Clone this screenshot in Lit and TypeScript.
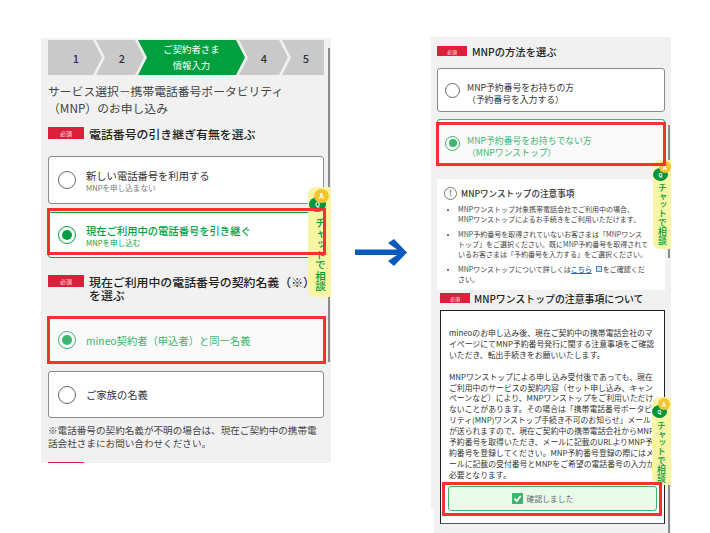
import { LitElement, html, css } from "lit";
import { customElement } from "lit/decorators.js";

const chat = (cls: string) => html`<div class="chat ${cls}">
  <span class="q">Q</span><span class="a">A</span>
  <span class="chat-text">チャットで相談</span>
</div>`;

@customElement("app-root")
export class AppRoot extends LitElement {
  static styles = css`
    :host { display: block; width: 710px; height: 533px; position: relative; overflow: hidden; background: #fff;
      font-family: "Noto Sans CJK JP", "Noto Sans", sans-serif; color: #333; }
    * { box-sizing: border-box; }
    .panel { position: absolute; background: #f1f1f1; overflow: hidden; }
    .left { left: 41px; top: 38px; width: 290px; height: 425px; padding: 2px 7px 0; }
    .steps { display: flex; height: 35px; }
    .step { background: #c9c9c9; display: flex; align-items: center; justify-content: center; margin-left: -6px;
      font-size: 11px; font-weight: 500; color: #333; }
    .s1 { width: 54px; margin-left: 0; clip-path: polygon(0 0, 45px 0, 54px 50%, 45px 100%, 0 100%); padding-left: 2px; }
    .s2 { width: 48px; clip-path: polygon(0 0, 39px 0, 48px 50%, 39px 100%, 0 100%, 9px 50%); padding-left: 4px; }
    .s3 { width: 107px; background: #00a040; color: #fff; font-size: 9.4px; line-height: 16px; text-align: center; font-weight: 400; padding-bottom: 1px;
      clip-path: polygon(0 0, 98px 0, 107px 50%, 98px 100%, 0 100%, 9px 50%); }
    .s4 { width: 49px; clip-path: polygon(0 0, 40px 0, 49px 50%, 40px 100%, 0 100%, 9px 50%); padding-left: 1px; }
    .s5 { width: 42px; clip-path: polygon(0 0, 100% 0, 100% 100%, 0 100%, 9px 50%); padding-left: 6px; }
    .title { margin: 7px 0 0; font-size: 11.8px; line-height: 17px; font-weight: 400; color: #444; white-space: nowrap; }
    .head { display: flex; gap: 5px; align-items: flex-start; color: #222; font-weight: 500; }
    .badge { flex: none; background: #dc1f3a; color: #f6c9cf; display: flex; align-items: center; justify-content: center; }
    .left .badge { width: 36px; height: 12px; font-size: 6px; }
    .left .head { font-size: 11.9px; line-height: 13px; }
    .h1 { margin-top: 11px; height: 29px; }
    .h2 { margin-top: 17px; height: 42px; }
    .opt { border: 1px solid #8a8a8a; border-radius: 3px; background: #fff; display: flex; align-items: center; }
    .left .opt { height: 48px; padding-left: 9px; gap: 10px; font-size: 10.3px; line-height: 13px; }
    .radio { flex: none; width: 18px; height: 18px; border: 1px solid #666; border-radius: 50%; background: #fff;
      display: flex; align-items: center; justify-content: center; }
    .on { border-color: #00a040; color: #00a040; background: #fff; font-weight: 500; }
    .on .radio { border-color: #00a040; }
    .on .radio::after { content: ""; width: 10px; height: 10px; border-radius: 50%; background: #00a040; }
    .soft { border-color: #3cb56e; color: #3cb56e; background: #fafafa; font-weight: 400; }
    .soft .radio { border-color: #3cb56e; background: #fafafa; }
    .soft .radio::after { background: #3cb56e; }
    .sub { display: block; margin-top: 1px; font-size: 7.6px; line-height: 9px; color: #777; font-weight: 400; }
    .on .sub { color: #00a040; }
    .o2 { margin-top: 8px; height: 46px !important; }
    .o3 { height: 46px !important; }
    .o4 { margin-top: 8px; height: 47px !important; }
    .note { margin: 6px 0 0; font-size: 9.6px; line-height: 12.5px; color: #444; white-space: nowrap; }
    .h3 { margin-top: 13px; }

    .scroll { position: absolute; width: 2px; background: #8c8c8c; }
    .sb1 { left: 328px; top: 48px; height: 314px; }
    .sb2 { left: 668px; top: 125px; height: 133px; }
    .sb3 { left: 668px; top: 430px; height: 103px; }

    .right { left: 431px; top: 37px; width: 240px; height: 472px; padding: 8px 6px 0; }
    .right .badge { width: 30px; height: 10px; font-size: 5px; margin-top: 1px; }
    .right .head { font-size: 10.3px; line-height: 13px; }
    .right .opt { height: 44px; padding-left: 7px; gap: 7px; font-size: 8.8px; line-height: 12px; border-radius: 3px; }
    .right .opt-text { margin-top: 8px; }
    .right .radio { width: 15px; height: 15px; }
    .right .radio::after { width: 8px; height: 8px; }
    .ra { margin-top: 10px; }
    .rb { margin-top: 7px; height: 47px !important; border-bottom: none !important; border-radius: 3px 3px 0 0 !important; }
    .notice { margin-top: 13px; height: 111px; background: #fff; padding: 7px 8px 0 8px; color: #444; overflow: hidden; }
    .n-head { display: flex; align-items: center; gap: 4px; font-size: 8.6px; line-height: 14px; font-weight: 500; color: #333; }
    .bang { flex: none; width: 13px; height: 13px; border: 1.4px solid #777; border-radius: 50%; display: flex; align-items: center;
      justify-content: center; font-size: 8px; line-height: 1; color: #777; font-weight: 700; margin-left: -1px; }
    ul { margin: 4px 0 0; padding: 0 0 0 13px; font-size: 7px; line-height: 10px; white-space: nowrap; }
    li { margin-bottom: 5px; padding-left: 0; }
    li::marker { font-size: 6px; }
    a { color: #1a6fc4; text-decoration: underline; font-weight: 500; }
    .ext { display: inline-block; width: 6px; height: 6px; background: #cfe0f2; border: 1.5px solid #4f8cc9; margin: 0 1px 0 4px; }

    .lower { left: 434px; top: 290px; width: 237px; height: 243px; padding: 3px 6px 0; }
    .lower .head { font-size: 9.9px; line-height: 13px; gap: 4px; }
    .lower .badge { width: 30px; height: 10px; font-size: 5px; }
    .modal { margin-top: 4px; height: 214px; width: 225px; background: #fff; border: 1px solid #222; border-bottom-color: #555;
      padding: 17px 8px 0; display: flex; flex-direction: column; }
    .modal p { margin: 0 0 10.9px; font-size: 7.85px; line-height: 10.9px; color: #333; white-space: nowrap; }
    .confirm { margin: -6px -1px 0 -1px; height: 25px; padding-right: 20px; background: #e9fbe9; border: 1px solid #3cb56e; border-radius: 3px;
      display: flex; align-items: center; justify-content: center; gap: 4px; font-size: 7.8px; color: #666; }
    .check { width: 11px; height: 11px; background: #3cb56e; border-radius: 1px; display: block; }

    .red { position: absolute; border: 3px solid #f53232; pointer-events: none; }
    .r1 { left: 47px; top: 208px; width: 279px; height: 47px; }
    .r2 { left: 47px; top: 316px; width: 279px; height: 48px; }
    .r3 { left: 436px; top: 122px; width: 230px; height: 44px; }
    .r4 { left: 442px; top: 482px; width: 220px; height: 34px; }

    .arrow { position: absolute; left: 355px; top: 239px; }

    .chat { position: absolute; background: #f8f6a4; border-radius: 7px 0 0 7px; }
    .chat-text { position: absolute; writing-mode: vertical-rl; text-orientation: upright; color: #00963c; font-weight: 500; white-space: nowrap; }
    .q, .a { position: absolute; border-radius: 50%; display: flex; align-items: center; justify-content: center; font-weight: 700; }
    .q { background: #00963c; color: #fff; }
    .a { background: #f4c430; color: #fff; }
    .c1 { left: 308px; top: 187px; width: 23px; height: 110px; }
    .c1 .q { left: 1px; top: 10px; width: 17px; height: 15px; font-size: 6px; }
    .c1 .a { left: 6px; top: 2px; width: 15px; height: 14px; font-size: 7px; }
    .c1 .chat-text { left: 6px; top: 31px; font-size: 10.5px; line-height: 13px; }
    .c2 { left: 653px; top: 160px; width: 18px; height: 89px; }
    .c3 { left: 652px; top: 397px; width: 19px; height: 88px; }
    .c2 .q, .c3 .q { left: 0; top: 8px; width: 15px; height: 13px; font-size: 5px; }
    .c2 .a, .c3 .a { left: 6px; top: 1px; width: 12px; height: 12px; font-size: 6px; }
    .c2 .chat-text, .c3 .chat-text { left: 3px; font-size: 8.8px; line-height: 12px; }
    .c2 .chat-text { top: 22.5px; }
    .c3 .chat-text { top: 23.5px; }
  `;

  render() {
    return html`
      <section class="panel left">
        <div class="steps">
          <div class="step s1">1</div>
          <div class="step s2">2</div>
          <div class="step s3"><span>ご契約者さま<br />情報入力</span></div>
          <div class="step s4">4</div>
          <div class="step s5">5</div>
        </div>
        <h1 class="title">サービス選択－携帯電話番号ポータビリティ<br />（MNP）のお申し込み</h1>
        <div class="head h1"><span class="badge">必須</span><span>電話番号の引き継ぎ有無を選ぶ</span></div>
        <div class="opt"><span class="radio"></span><span>新しい電話番号を利用する<span class="sub">MNPを申し込まない</span></span></div>
        <div class="opt on o2"><span class="radio"></span><span>現在ご利用中の電話番号を引き継ぐ<span class="sub">MNPを申し込む</span></span></div>
        <div class="head h2"><span class="badge">必須</span><span>現在ご利用中の電話番号の契約名義（※）<br />を選ぶ</span></div>
        <div class="opt soft on o3"><span class="radio"></span><span>mineo契約者（申込者）と同一名義</span></div>
        <div class="opt o4"><span class="radio"></span><span>ご家族の名義</span></div>
        <p class="note">※電話番号の契約名義が不明の場合は、現在ご契約中の携帯電<br />話会社さまにお問い合わせください。</p>
        <div class="head h3"><span class="badge">必須</span><span>MNPの方法を選ぶ</span></div>
      </section>
      <div class="scroll sb1"></div>

      <svg class="arrow" width="52" height="28" viewBox="0 0 52 28" aria-hidden="true">
        <path d="M0 10.5H42L33 4 39 0 52 13.5 39 27 33 22 42 16H0Z" fill="#0a5bbd" />
      </svg>

      <section class="panel right">
        <div class="head"><span class="badge">必須</span><span>MNPの方法を選ぶ</span></div>
        <div class="opt ra"><span class="radio"></span><span class="opt-text">MNP予約番号をお持ちの方<br />（予約番号を入力する）</span></div>
        <div class="opt soft on rb"><span class="radio"></span><span class="opt-text">MNP予約番号をお持ちでない方<br />（MNPワンストップ）</span></div>
        <div class="notice">
          <div class="n-head"><span class="bang">!</span>MNPワンストップの注意事項</div>
          <ul>
            <li>MNPワンストップ対象携帯電話会社でご利用中の場合、<br />MNPワンストップによるお手続きをご利用いただけます。</li>
            <li>MNP予約番号を取得されていないお客さまは「MNPワンス<br />トップ」をご選択ください。既にMNP予約番号を取得されて<br />いるお客さまは「予約番号を入力する」をご選択ください。</li>
            <li>MNPワンストップについて詳しくは<a>こちら</a><span class="ext"></span>をご確認くだ<br />さい。</li>
          </ul>
        </div>
      </section>
      <section class="panel lower">
        <div class="head"><span class="badge">必須</span><span>MNPワンストップの注意事項について</span></div>
        <div class="modal">
          <p>mineoのお申し込み後、現在ご契約中の携帯電話会社のマ<br />イページにてMNP予約番号発行に関する注意事項をご確認<br />いただき、転出手続きをお願いいたします。</p>
          <p>MNPワンストップによる申し込み受付後であっても、現在<br />ご利用中のサービスの契約内容（セット申し込み、キャン<br />ペーンなど）により、MNPワンストップをご利用いただけ<br />ないことがあります。その場合は「携帯電話番号ポータビ<br />リティ(MNP)ワンストップ手続き不可のお知らせ」メール<br />が送られますので、現在ご契約中の携帯電話会社からMNP<br />予約番号を取得いただき、メールに記載のURLよりMNP予<br />約番号を登録してください。MNP予約番号登録の際にはメ<br />ールに記載の受付番号とMNPをご希望の電話番号の入力が<br />必要となります。</p>
          <div class="confirm">
            <svg class="check" viewBox="0 0 11 11" aria-hidden="true"><rect width="11" height="11" rx="1" fill="#3cb56e" /><path d="M2.5 5.5 4.7 8 8.7 3" fill="none" stroke="#fff" stroke-width="1.8" /></svg>
            <span>確認しました</span>
          </div>
        </div>
      </section>
      <div class="scroll sb2"></div>
      <div class="scroll sb3"></div>

      ${chat("c1")} ${chat("c2")} ${chat("c3")}

      <div class="red r1"></div>
      <div class="red r2"></div>
      <div class="red r3"></div>
      <div class="red r4"></div>
    `;
  }
}
